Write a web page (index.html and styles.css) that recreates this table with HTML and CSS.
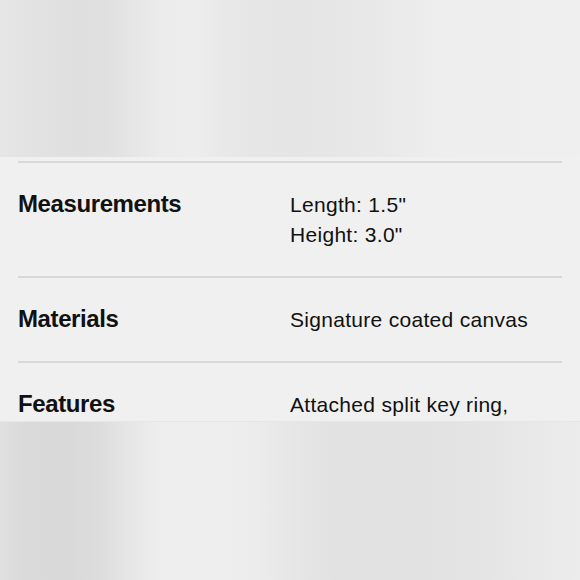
FILE: index.html
```html
<!DOCTYPE html>
<html lang="en">
<head>
<meta charset="utf-8">
<title>Specs</title>
<link rel="stylesheet" href="styles.css">
</head>
<body>
<div class="photo photo-top"></div>
<section class="specs">
  <div class="row">
    <div class="label">Measurements</div>
    <div class="value">Length: 1.5"<br>Height: 3.0"</div>
  </div>
  <div class="row">
    <div class="label">Materials</div>
    <div class="value">Signature coated canvas</div>
  </div>
  <div class="row">
    <div class="label">Features</div>
    <div class="value">Attached split key ring,</div>
  </div>
</section>
<div class="photo photo-bottom"></div>
</body>
</html>
```

FILE: styles.css
```css
html, body {
  margin: 0;
  padding: 0;
}
body {
  width: 580px;
  height: 580px;
  overflow: hidden;
  background: #efefef;
  font-family: "Liberation Sans", Arial, sans-serif;
  color: #111;
}
.photo {
  width: 100%;
}
.photo-top {
  height: 157px;
  background: linear-gradient(to right,
    #e6e6e6 0%, #e1e1e1 8%, #dfdfdf 14%, #e1e1e1 19%, #e6e6e6 23%,
    #ececec 28%, #ededed 34%, #e9e9e9 38%, #e6e6e6 44%, #e5e5e5 52%,
    #e7e7e7 60%, #eaeaea 68%, #eeeeee 76%, #efefef 100%);
}
.photo-bottom {
  height: 158px;
  background: linear-gradient(to right,
    #e0e0e0 0%, #dadada 4%, #d9d9d9 12%, #dcdcdc 17%, #e6e6e6 22%,
    #ededed 27%, #eeeeee 36%, #ececec 44%, #e6e6e6 51%, #e2e2e2 58%,
    #e2e2e2 72%, #e4e4e4 82%, #e8e8e8 90%, #ececec 100%);
}
.specs {
  box-sizing: border-box;
  height: 265px;
  padding: 4px 18px 0;
  background: #f0f0f0;
  overflow: hidden;
  border-bottom: 1px solid #e6e6e6;
}
.row {
  display: flex;
  align-items: baseline;
  border-top: 2px solid #d9d9d9;
  padding: 26px 0 26px;
}
.label {
  width: 272px;
  flex: none;
  font-size: 24px;
  line-height: 30px;
  font-weight: bold;
  letter-spacing: -0.4px;
}
.value {
  font-size: 21px;
  line-height: 30px;
  letter-spacing: 0.3px;
}
```
